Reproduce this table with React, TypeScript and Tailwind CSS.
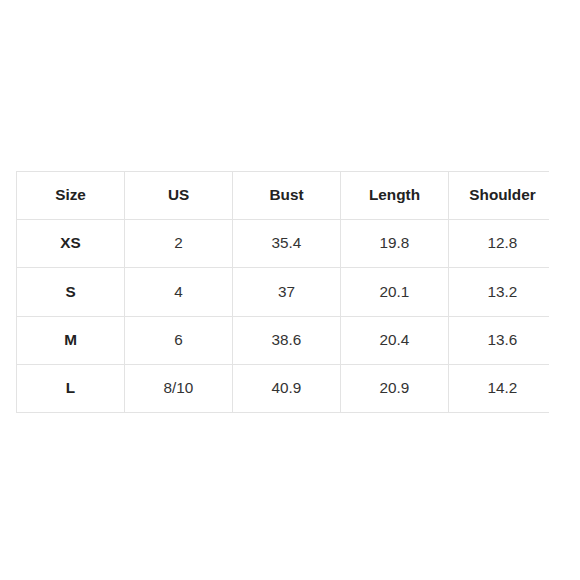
import React from 'react';

const headers = ['Size', 'US', 'Bust', 'Length', 'Shoulder'];

const rows: string[][] = [
  ['XS', '2', '35.4', '19.8', '12.8'],
  ['S', '4', '37', '20.1', '13.2'],
  ['M', '6', '38.6', '20.4', '13.6'],
  ['L', '8/10', '40.9', '20.9', '14.2'],
];

const App: React.FC = () => {
  return (
    <div className="min-h-[580px] bg-white pt-[171px] font-['Liberation_Sans',Arial,sans-serif]">
      <div className="ml-[16px] w-[533px] overflow-hidden">
        <table className="w-[541px] table-fixed border-collapse text-[15.3px]">
          <thead>
            <tr>
              {headers.map((h) => (
                <th
                  key={h}
                  className="h-[48.2px] w-[108px] border border-[#e3e3e3] p-0 text-center font-bold text-[#222]"
                >
                  {h}
                </th>
              ))}
            </tr>
          </thead>
          <tbody>
            {rows.map((row) => (
              <tr key={row[0]}>
                {row.map((cell, i) => (
                  <td
                    key={i}
                    className={`h-[48.2px] border border-[#e3e3e3] p-0 text-center ${
                      i === 0 ? 'font-bold text-[#222]' : 'text-[#333]'
                    }`}
                  >
                    {cell}
                  </td>
                ))}
              </tr>
            ))}
          </tbody>
        </table>
      </div>
    </div>
  );
};

export default App;
